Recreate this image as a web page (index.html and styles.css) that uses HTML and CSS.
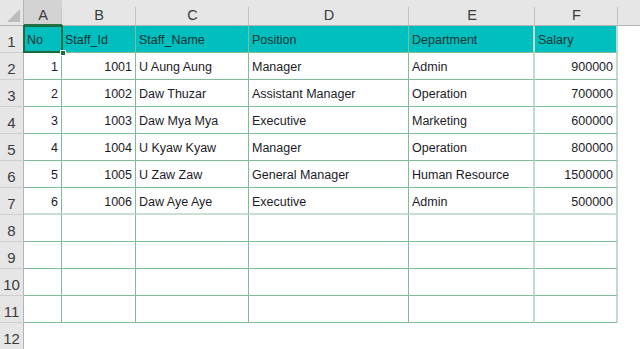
FILE: index.html
```html
<!DOCTYPE html>
<html>
<head>
<meta charset="utf-8">
<link rel="stylesheet" href="styles.css">
</head>
<body>
<div class="sheet">
  <div class="corner"><span class="tri"></span></div>
  <div class="colh sel">A</div>
  <div class="colh">B</div>
  <div class="colh">C</div>
  <div class="colh">D</div>
  <div class="colh">E</div>
  <div class="colh">F</div>
  <div class="colh rest"></div>

  <div class="rowh">1</div>
  <div class="c hd active">No<span class="handle"></span></div>
  <div class="c hd">Staff_Id</div>
  <div class="c hd">Staff_Name</div>
  <div class="c hd">Position</div>
  <div class="c hd e">Department</div>
  <div class="c hd f">Salary</div>
  <div class="blank"></div>

  <div class="rowh">2</div>
  <div class="c num">1</div>
  <div class="c num">1001</div>
  <div class="c">U Aung Aung</div>
  <div class="c">Manager</div>
  <div class="c e">Admin</div>
  <div class="c num f">900000</div>
  <div class="blank"></div>

  <div class="rowh">3</div>
  <div class="c num">2</div>
  <div class="c num">1002</div>
  <div class="c">Daw Thuzar</div>
  <div class="c">Assistant Manager</div>
  <div class="c e">Operation</div>
  <div class="c num f">700000</div>
  <div class="blank"></div>

  <div class="rowh">4</div>
  <div class="c num">3</div>
  <div class="c num">1003</div>
  <div class="c">Daw Mya Mya</div>
  <div class="c">Executive</div>
  <div class="c e">Marketing</div>
  <div class="c num f">600000</div>
  <div class="blank"></div>

  <div class="rowh">5</div>
  <div class="c num">4</div>
  <div class="c num">1004</div>
  <div class="c">U Kyaw Kyaw</div>
  <div class="c">Manager</div>
  <div class="c e">Operation</div>
  <div class="c num f">800000</div>
  <div class="blank"></div>

  <div class="rowh">6</div>
  <div class="c num">5</div>
  <div class="c num">1005</div>
  <div class="c">U Zaw Zaw</div>
  <div class="c">General Manager</div>
  <div class="c e">Human Resource</div>
  <div class="c num f">1500000</div>
  <div class="blank"></div>

  <div class="rowh">7</div>
  <div class="c num lb">6</div>
  <div class="c num lb">1006</div>
  <div class="c lb">Daw Aye Aye</div>
  <div class="c lb">Executive</div>
  <div class="c e lb">Admin</div>
  <div class="c num f lb">500000</div>
  <div class="blank"></div>

  <div class="rowh">8</div>
  <div class="c"></div><div class="c"></div><div class="c"></div><div class="c"></div><div class="c e"></div><div class="c f"></div>
  <div class="blank"></div>

  <div class="rowh">9</div>
  <div class="c"></div><div class="c"></div><div class="c"></div><div class="c"></div><div class="c e"></div><div class="c f"></div>
  <div class="blank"></div>

  <div class="rowh">10</div>
  <div class="c"></div><div class="c"></div><div class="c"></div><div class="c"></div><div class="c e"></div><div class="c f"></div>
  <div class="blank"></div>

  <div class="rowh">11</div>
  <div class="c"></div><div class="c"></div><div class="c"></div><div class="c"></div><div class="c e"></div><div class="c f"></div>
  <div class="blank"></div>

  <div class="rowh last">12</div>
  <div class="empty"></div>
</div>
</body>
</html>
```

FILE: styles.css
```css
* { box-sizing: border-box; }
html, body {
  margin: 0;
  padding: 0;
  background: #ffffff;
  overflow: hidden;
}
.sheet {
  width: 640px;
  height: 349px;
  display: grid;
  grid-template-columns: 24px 38px 74px 113px 160px 126px 83px 1fr;
  grid-template-rows: 26px repeat(11, 27px) 27px;
  font-family: "Liberation Sans", Arial, sans-serif;
  font-size: 12.5px;
  color: #1c1c28;
}
.corner {
  background: #e6e6e6;
  border-right: 1px solid #b4b4b4;
  border-bottom: 1px solid #b4b4b4;
  position: relative;
}
.tri {
  position: absolute;
  right: 3px;
  bottom: 3px;
  width: 0;
  height: 0;
  border-left: 13px solid transparent;
  border-bottom: 13px solid #bcbcbc;
}
.colh {
  background: #e6e6e6;
  border-bottom: 1px solid #b4b4b4;
  display: flex;
  align-items: flex-end;
  justify-content: center;
  padding-bottom: 2px;
  font-size: 14.5px;
  color: #3c3c3c;
  position: relative;
}
.colh::after {
  content: "";
  position: absolute;
  right: 0;
  top: 7px;
  bottom: 0;
  width: 1px;
  background: #c4c4c4;
}
.colh.sel {
  background: #d3d3d3;
  border-bottom: 2px solid #217346;
  padding-bottom: 1px;
}
.colh.rest::after { display: none; }
.rowh {
  background: #e6e6e6;
  border-right: 1px solid #b4b4b4;
  border-bottom: 1px solid #d0d0d0;
  display: flex;
  align-items: center;
  justify-content: center;
  font-size: 15px;
  color: #3c3c3c;
  padding-top: 4px;
}
.rowh.last { border-bottom: none; }
.c {
  border-right: 1px solid #7fbd98;
  border-bottom: 1px solid #7fbd98;
  padding: 2px 3px 0 3px;
  display: flex;
  align-items: center;
  white-space: nowrap;
  overflow: hidden;
}
.c.num { justify-content: flex-end; }
.c.e { border-right: 2px solid #c2dccc; }
.c.f { border-right: 2px solid #c2dccc; }
.c.lb { border-bottom: 2px solid #c8dfd1; }
.c.hd {
  background: #00bfbe;
  color: #0c3434;
}
.c.active {
  position: relative;
  overflow: visible;
}
.c.active::before {
  content: "";
  position: absolute;
  left: -1px;
  top: -1px;
  right: -2px;
  bottom: -1px;
  border: 2px solid #1d6b40;
  pointer-events: none;
}
.handle {
  position: absolute;
  right: -5px;
  bottom: -4px;
  width: 6px;
  height: 6px;
  background: #1d6b40;
  border: 1px solid #ffffff;
  z-index: 2;
}
.blank { background: #ffffff; }
.empty { grid-column: 2 / 9; background: #ffffff; }
```
